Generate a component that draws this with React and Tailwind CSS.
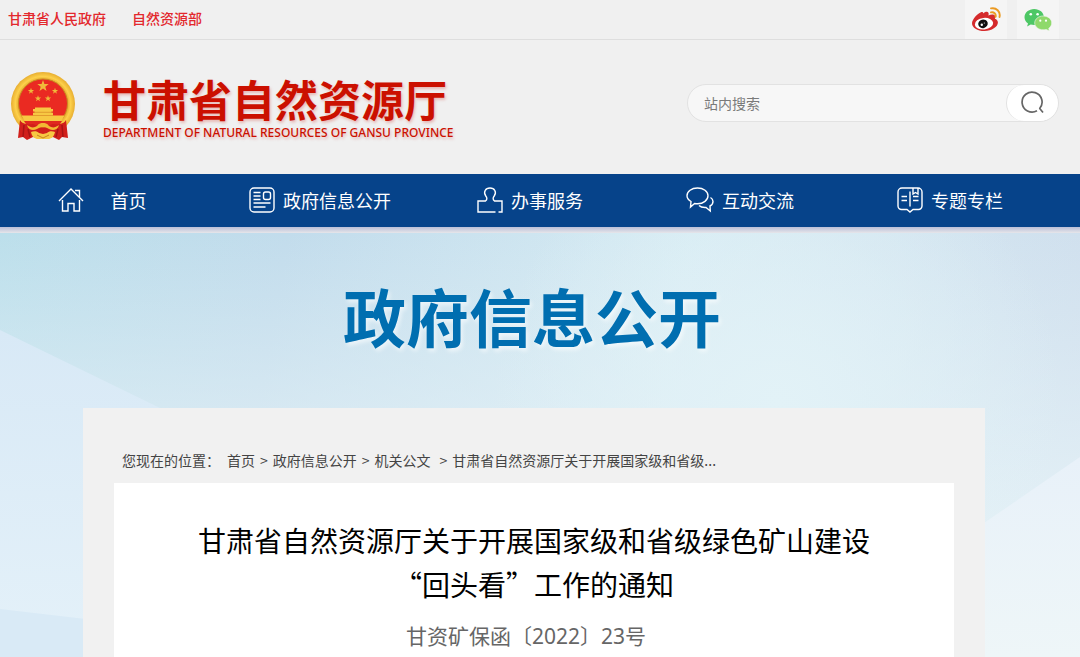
import React, { useState } from "react";

const navItems = [
  { label: "首页", icon: HomeIcon, className: "gap-[27px] pr-4" },
  { label: "政府信息公开", icon: NewsIcon, className: "gap-2" },
  { label: "办事服务", icon: ServiceIcon, className: "gap-2" },
  { label: "互动交流", icon: ChatIcon, className: "gap-2" },
  { label: "专题专栏", icon: TopicIcon, className: "gap-2" },
];

const lineProps = {
  viewBox: "0 0 26 26",
  fill: "none",
  stroke: "currentColor",
  strokeWidth: 1.4,
  "aria-hidden": true,
};

function HomeIcon() {
  return (
    <svg className="size-[26px] shrink-0" {...lineProps}>
      <path d="M1 14 13 2l12 12" />
      <path d="M17 3.500h4.500v6.500" />
      <path d="M4.500 13v11h5.500v-7.500h6V24h5.500V13" />
    </svg>
  );
}

function NewsIcon() {
  return (
    <svg className="size-[26px] shrink-0" {...lineProps}>
      <rect x="1" y="1" width="24" height="24" rx="4" />
      <path d="M4.500 5.500h7M4.500 9h7M4.500 12.500h7M4.500 16h17M4.500 20h12" />
      <rect x="14.500" y="5" width="7" height="7.500" rx="2" />
    </svg>
  );
}

function ServiceIcon() {
  return (
    <svg className="size-[26px] shrink-0" {...lineProps}>
      <path d="M18.500 25H1V14h7.500c2-1.500 1.500-3.500.3-5C6 5 8.500 1 13 1s7 4 4.200 8c-1.200 1.500-1.700 3.500.3 5H25v11h-3.500" />
    </svg>
  );
}

function ChatIcon() {
  return (
    <svg
      className="h-[26px] w-7 shrink-0"
      {...lineProps}
      viewBox="0 0 28 26"
    >
      <path d="M4.500 20 5 14.500C2.500 13 1 11 1 8.800 1 4.500 5.500 1 11.500 1S22 4.500 22 8.800s-4.500 8-10.500 8c-1 0-2-.1-2.900-.3z" />
      <path d="M24.500 10.500c1.600 1 2.500 2.300 2.500 4 0 2-1.200 3.600-3 4.500l.3 5-4.300-3.500c-3 .2-5.500-.5-7-2" />
    </svg>
  );
}

function TopicIcon() {
  return (
    <svg className="size-[26px] shrink-0" {...lineProps}>
      <path d="M5 1h16a4 4 0 0 1 4 4v14a3.500 3.500 0 0 1-3.500 3.500H16L13 25l-3-2.500H4.500A3.500 3.500 0 0 1 1 19V5a4 4 0 0 1 4-4z" />
      <path d="M13 4.500v15M4.500 9.500H10M4.500 13.500H10M16 9.500h5.500M16 13.500h5.500M16 1v6l2.500-1.500L21 7V1" />
    </svg>
  );
}

function SearchIcon() {
  return (
    <svg
      className="size-6"
      viewBox="0 0 24 24"
      fill="none"
      stroke="currentColor"
      strokeWidth="1.7"
      aria-hidden="true"
    >
      <path d="M16 19.800a10 10 0 1 1 2.500-2M18.500 17.300l3.500 4.200" />
    </svg>
  );
}

function WeiboIcon() {
  return (
    <svg className="h-[26px] w-[30px]" viewBox="0 0 30 26" aria-hidden="true">
      <path
        d="M12 6.500c2-1.700 4.600-2.300 5.400-.7.500.9.200 1.900 0 2.700 2.400-1 5.400-1.400 6.500.2.700 1 .3 2.100 0 3 1.800.7 3 1.900 3 3.900 0 4.400-6.200 8.400-13.400 8.400C6.300 24 1 20.700 1 16.200 1 12.500 6.500 6.500 10 5.200c1.600-.5 2.400.2 2 1.300z"
        fill="#d52a2c"
      />
      <ellipse cx="13" cy="16.700" rx="9.200" ry="5.800" fill="#fff" transform="rotate(-6 13 16.700)" />
      <ellipse cx="12" cy="16.800" rx="4.800" ry="4.300" fill="#111" transform="rotate(-15 12 16.800)" />
      <circle cx="10.800" cy="17.800" r="1.200" fill="#fff" />
      <circle cx="13.300" cy="16" r=".6" fill="#fff" />
      <path
        d="M20 1.400c5.200-1.200 9.800 3.200 8.500 8.600M20 5.400c2.800-.7 5.400 1.600 4.600 4.400"
        fill="none"
        stroke="#eb9a22"
        strokeWidth="1.900"
        strokeLinecap="round"
      />
    </svg>
  );
}

function WechatIcon() {
  return (
    <svg className="h-6 w-7" viewBox="0 0 28 24" aria-hidden="true">
      <path
        d="M10.200 1C4.800 1 .5 4.600.5 9.200c0 2.600 1.300 4.800 3.500 6.300l-.9 3 3.600-1.900c1.100.3 2.200.5 3.500.5 5.400 0 9.700-3.500 9.700-7.900C19.900 4.600 15.600 1 10.200 1z"
        fill="#4dc765"
      />
      <circle cx="6.800" cy="6.200" r="1.300" fill="#fff" />
      <circle cx="13.600" cy="6.200" r="1.300" fill="#fff" />
      <path
        d="M19.200 8c4.700 0 8.500 3 8.500 7 0 2.200-1.200 4.100-3 5.400l.7 2.600-3.100-1.600c-1 .3-2 .4-3.100.4-4.700 0-8.500-3-8.500-6.800 0-4 3.800-7 8.500-7z"
        fill="#8fd96b"
        stroke="#f5f5f5"
        strokeWidth=".6"
      />
      <circle cx="16.300" cy="12.700" r="1.100" fill="#fff" />
      <circle cx="22" cy="12.700" r="1.100" fill="#fff" />
    </svg>
  );
}

const STAR =
  "M0-6 1.400-1.900 5.700-1.900 2.300.7 3.500 4.900 0 2.400-3.500 4.900-2.300.7-5.700-1.900-1.400-1.900Z";

function Emblem() {
  return (
    <svg
      className="h-[70px] w-[66px] shrink-0"
      viewBox="0 0 66 70"
      role="img"
      aria-label="国徽"
    >
      <defs>
        <radialGradient id="gold" cx="50%" cy="50%" r="50%">
          <stop offset="74%" stopColor="#e0a026" />
          <stop offset="86%" stopColor="#fdd14b" />
          <stop offset="100%" stopColor="#e8ae30" />
        </radialGradient>
      </defs>
      <circle cx="33" cy="32" r="32" fill="url(#gold)" />
      <circle cx="33" cy="31.500" r="24.500" fill="#ea2a22" stroke="#c98a20" />
      <g fill="#f0b93a">
        <path d={STAR} transform="translate(33 14)" />
        <path d={STAR} transform="translate(21 19) scale(.55)" />
        <path d={STAR} transform="translate(45 19) scale(.55)" />
        <path d={STAR} transform="translate(28 26.500) scale(.55)" />
        <path d={STAR} transform="translate(38 26.500) scale(.55)" />
      </g>
      <path
        d="M25 35.500h16v1.500h2v2.500h-1.500V41H43v2.500h11.500l-3 5.500H14.500l-3-5.500H23V41h1.500v-1.500H23V37h2z"
        fill="#f7c843"
      />
      <path d="M23 40.300h20M23 43.500h20" stroke="#d98a24" strokeWidth=".7" />
      <path d="M14 49h38l-4 6H18z" fill="#e0281f" />
      <path
        d="M10 48c2 4 8 5 13 4l10 4 10-4c5 1 11 0 13-4l2 18-6-1-3 3-6-3-10 2-10-2-6 3-4-3-5 1z"
        fill="#d11f1b"
      />
      <path d="M14 53l-1 12M18 57l2 8M52 53l1 12M48 57l-2 8" stroke="#a81414" strokeWidth="1.500" />
      <path
        d="M17 53c4 3 7 3 10 1 2-3 4-3 6-3s4 0 6 3c3 2 6 2 10-1-1 5-6 6-10 4-2-1-3-2-6-2s-4 1-6 2c-4 2-9 1-10-4z"
        fill="#f2b933"
      />
      <path
        d="M21 60c3-1 6-1 8 1l4 1 4-1c2-2 5-2 8-1-1 5-4 7-7 7H28c-3 0-6-2-7-7z"
        fill="#f7c843"
      />
      <path d="M27 63l6 3 6-3" fill="none" stroke="#c9821e" />
    </svg>
  );
}

function TopBar() {
  return (
    <div className="flex h-10 items-stretch justify-between border-b border-[#dedede] pr-[21px] pl-2">
      <div className="flex items-center gap-[26px] pb-1 text-sm font-medium text-[#e3282d]">
        <a href="#gansu">甘肃省人民政府</a>
        <a href="#mnr">自然资源部</a>
      </div>
      <div className="flex gap-[10px]">
        <a
          href="#weibo"
          aria-label="微博"
          className="flex w-[42px] items-center justify-center bg-[#f5f5f5]"
        >
          <WeiboIcon />
        </a>
        <a
          href="#wechat"
          aria-label="微信"
          className="flex w-[42px] items-center justify-center bg-[#f5f5f5]"
        >
          <WechatIcon />
        </a>
      </div>
    </div>
  );
}

function Header() {
  const [keyword, setKeyword] = useState("");

  return (
    <header className="flex h-[134px] items-start justify-between pr-[21px] pl-[10px]">
      <a href="#home" className="flex pt-8 text-[#cb1000]">
        <Emblem />
        <span className="ml-[27px] flex flex-col">
          <span className="text-[43px] leading-[52px] font-bold whitespace-nowrap [text-shadow:1px_2px_3px_rgba(203,16,0,0.25)]">
            甘肃省自然资源厅
          </span>
          <span className="pt-[3px] font-['Noto_Sans'] text-[12px] leading-3 font-medium whitespace-nowrap [text-shadow:1px_2px_3px_rgba(203,16,0,0.25)]">
            DEPARTMENT OF NATURAL RESOURCES OF GANSU PROVINCE
          </span>
        </span>
      </a>

      <form
        role="search"
        onSubmit={(e) => e.preventDefault()}
        className="mt-11 flex h-[38px] w-[372px] overflow-hidden rounded-full border border-[#e2e2e2] bg-[#f7f7f7]"
      >
        <input
          type="text"
          aria-label="站内搜索"
          placeholder="站内搜索"
          value={keyword}
          onChange={(e) => setKeyword(e.target.value)}
          className="min-w-0 flex-1 pl-4 text-sm text-gray-700 outline-none placeholder:text-[#7a7a7a]"
        />
        <button
          type="submit"
          aria-label="搜索"
          className="flex w-[52px] items-center justify-center rounded-full border-l border-[#e2e2e2] bg-white text-[#666]"
        >
          <SearchIcon />
        </button>
      </form>
    </header>
  );
}

function NavBar() {
  return (
    <nav className="grid h-[53px] grid-cols-5 bg-[#06438a] pr-[25px] pb-[2px] pl-[5px]">
      {navItems.map(({ label, icon: Icon, className }) => (
        <a
          key={label}
          href={`#${label}`}
          className={`flex items-center justify-center text-lg text-white ${className}`}
        >
          <Icon />
          <span className="whitespace-nowrap">{label}</span>
        </a>
      ))}
    </nav>
  );
}

// Pale translucent facets behind the article
function Facets() {
  return (
    <svg
      className="absolute inset-0 h-full w-full"
      viewBox="0 0 1080 424"
      preserveAspectRatio="none"
      aria-hidden="true"
    >
      <defs>
        <linearGradient id="facet" x1="0" y1="0" x2="0" y2="1">
          <stop offset="0" stopColor="#d8e9f6" />
          <stop offset="1" stopColor="#e4f1f9" />
        </linearGradient>
        <linearGradient id="facetRight" x1="0" y1="0" x2="0" y2="1">
          <stop offset="0" stopColor="#e8f1f9" />
          <stop offset="1" stopColor="#eef6f8" />
        </linearGradient>
      </defs>
      <path d="M0 97 240 214V424H0z" fill="url(#facet)" />
      <path d="M0 376 120 390V424H0z" fill="#d9eaf6" />
      <path d="M1080 224 920 334V424h160z" fill="url(#facetRight)" />
    </svg>
  );
}

function Breadcrumb() {
  return (
    <div className="flex pl-2 text-sm leading-5 whitespace-nowrap text-[#444]">
      <span className="mr-[7px]">您现在的位置：</span>
      <nav aria-label="breadcrumb" className="flex gap-[5px]">
        <a href="#home">首页</a>
        <span>&gt;</span>
        <a href="#open">政府信息公开</a>
        <span>&gt;</span>
        <a href="#docs">机关公文</a>
        <span className="ml-1">&gt;</span>
        <span>甘肃省自然资源厅关于开展国家级和省级...</span>
      </nav>
    </div>
  );
}

const App = () => {
  return (
    <div
      lang="zh-CN"
      className="flex min-h-screen flex-col bg-[#f0f0f0] font-['Noto_Sans_CJK_SC',sans-serif]"
    >
      <TopBar />
      <Header />
      <NavBar />
      <div className="h-[6px] bg-linear-to-b from-[#b9bfd8] to-[#e6e6ea]" />

      <main className="relative flex grow flex-col bg-[radial-gradient(circle_at_72%_40%,#e2f2f7_0%,#dbeef500_35%),linear-gradient(to_bottom,#e3f0f600_0%,#e3f0f6_70%),linear-gradient(100deg,#bcdfeb_0%,#c2dcec_25%,#d6ebf3_60%,#cfdeed_100%)]">
        <Facets />
        <div className="relative flex grow flex-col pr-[95px] pl-[83px]">
          <h1 className="flex h-[175px] items-center justify-center pr-1 pb-3 text-[63px] leading-none font-bold whitespace-nowrap text-[#006eb0] [text-shadow:2px_3px_4px_rgba(255,255,255,0.6)]">
            政府信息公开
          </h1>
          <div className="flex grow flex-col bg-[#f1f1f1] px-[31px] pt-[42px]">
            <Breadcrumb />
            <article className="mt-[13px] grow bg-white px-10 pt-[35px] text-center">
              <h2 className="text-[28px] leading-[44px] text-black">
                甘肃省自然资源厅关于开展国家级和省级绿色矿山建设
                <br />
                “回头看”工作的通知
              </h2>
              <p className="mt-[14px] pr-4 font-['Noto_Sans','Noto_Sans_CJK_SC',sans-serif] text-[21px] leading-8 text-[#666]">
                甘资矿保函〔2022〕23号
              </p>
            </article>
          </div>
        </div>
      </main>
    </div>
  );
};

export default App;
